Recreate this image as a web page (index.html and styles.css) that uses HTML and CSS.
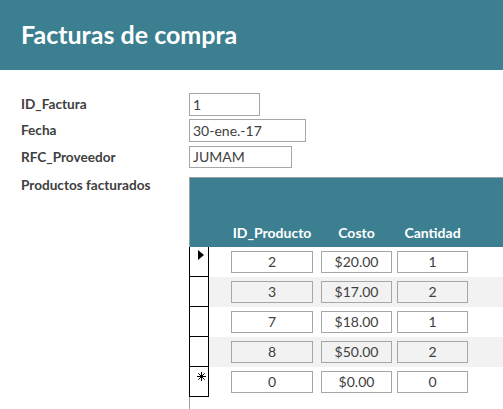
FILE: index.html
```html
<!DOCTYPE html>
<html lang="es">
<head>
<meta charset="utf-8">
<title>Facturas de compra</title>
<link rel="stylesheet" href="styles.css">
</head>
<body>
<header class="title-bar">
  <h1 class="title">Facturas de compra</h1>
</header>
<main class="form">
  <div class="field field-id">
    <span class="label">ID_Factura</span>
    <span class="input input-id">1</span>
  </div>
  <div class="field field-fecha">
    <span class="label">Fecha</span>
    <span class="input input-fecha">30-ene.-17</span>
  </div>
  <div class="field field-rfc">
    <span class="label">RFC_Proveedor</span>
    <span class="input input-rfc">JUMAM</span>
  </div>
  <div class="field field-sub">
    <span class="label">Productos facturados</span>
    <div class="subform">
      <div class="sheet-head">
        <span class="sel-space"></span>
        <span class="col col-id">ID_Producto</span>
        <span class="col col-costo">Costo</span>
        <span class="col col-cant">Cantidad</span>
      </div>
      <div class="row">
        <span class="sel"><svg class="mark-cur" width="6" height="10" viewBox="0 0 6 10"><polygon points="0,0 6,5 0,10" fill="#000"/></svg></span>
        <span class="cell col-id">2</span>
        <span class="cell col-costo">$20.00</span>
        <span class="cell col-cant">1</span>
      </div>
      <div class="row alt">
        <span class="sel"></span>
        <span class="cell col-id">3</span>
        <span class="cell col-costo">$17.00</span>
        <span class="cell col-cant">2</span>
      </div>
      <div class="row">
        <span class="sel"></span>
        <span class="cell col-id">7</span>
        <span class="cell col-costo">$18.00</span>
        <span class="cell col-cant">1</span>
      </div>
      <div class="row alt">
        <span class="sel"></span>
        <span class="cell col-id">8</span>
        <span class="cell col-costo">$50.00</span>
        <span class="cell col-cant">2</span>
      </div>
      <div class="row">
        <span class="sel"><svg class="mark-new" width="9" height="9" viewBox="0 0 9 9"><path d="M4.5 0V9M0 4.5H9M1.3 1.3L7.7 7.7M7.7 1.3L1.3 7.7" stroke="#000" stroke-width="1" fill="none"/></svg></span>
        <span class="cell col-id">0</span>
        <span class="cell col-costo">$0.00</span>
        <span class="cell col-cant">0</span>
      </div>
    </div>
  </div>
</main>
</body>
</html>
```

FILE: styles.css
```css
* { box-sizing: border-box; }
html, body { margin: 0; padding: 0; background: #fff; overflow: hidden; }
body {
  width: 503px;
  height: 409px;
  font-family: Lato, "Open Sans", sans-serif;
  color: #404040;
}
.title-bar {
  height: 70px;
  background: #3b7f91;
  padding: 19px 0 0 21px;
}
.title {
  margin: 0;
  font-size: 25px;
  font-weight: 700;
  line-height: 30px;
  color: #fff;
}
.form {
  padding: 23px 0 0 21px;
}
.field {
  display: flex;
  align-items: flex-start;
}
.label {
  width: 168px;
  flex: none;
  font-size: 13.6px;
  font-weight: 700;
  line-height: 23px;
  color: #404040;
}
.input {
  display: block;
  height: 23px;
  border: 1px solid #a6a6a6;
  padding: 0 3px;
  font-size: 14px;
  line-height: 21px;
  color: #404040;
}
.input-id { width: 71px; }
.input-fecha { width: 117px; }
.input-rfc { width: 103px; height: 22px; line-height: 20px; }
.field-id { margin-bottom: 3px; }
.field-fecha { margin-bottom: 4px; }
.field-rfc { margin-bottom: 8px; }
.field-sub .label { line-height: 16px; }
.subform {
  flex: none;
  width: 314px;
  height: 240px;
  border-top: 1px solid #a0a0a0;
  border-left: 1px solid #a0a0a0;
}
.sheet-head {
  height: 69px;
  background: #3b7f91;
  display: flex;
  align-items: flex-end;
  padding-bottom: 5px;
  color: #fff;
  font-weight: 700;
  font-size: 14px;
  line-height: 18px;
}
.sel-space { width: 19px; flex: none; }
.col-id { margin-left: 22px; width: 82px; }
.col-costo { margin-left: 8px; width: 71px; }
.col-cant { margin-left: 5px; width: 71px; }
.col { text-align: center; flex: none; }
.row {
  display: flex;
  height: 30px;
  background: #fff;
}
.row.alt { background: #f2f2f2; }
.sel {
  flex: none;
  width: 20px;
  height: 30px;
  margin-left: -1px;
  background: #fff;
  border-left: 1px solid #000;
  border-right: 1px solid #000;
  border-bottom: 1px solid #000;
}
.mark-cur { display: block; margin: 3px 0 0 8px; }
.mark-new { display: block; margin: 5px 0 0 7px; }
.cell {
  flex: none;
  height: 22px;
  margin-top: 4px;
  border: 1px solid #a6a6a6;
  text-align: center;
  font-size: 14px;
  line-height: 20px;
  color: #404040;
}
```
